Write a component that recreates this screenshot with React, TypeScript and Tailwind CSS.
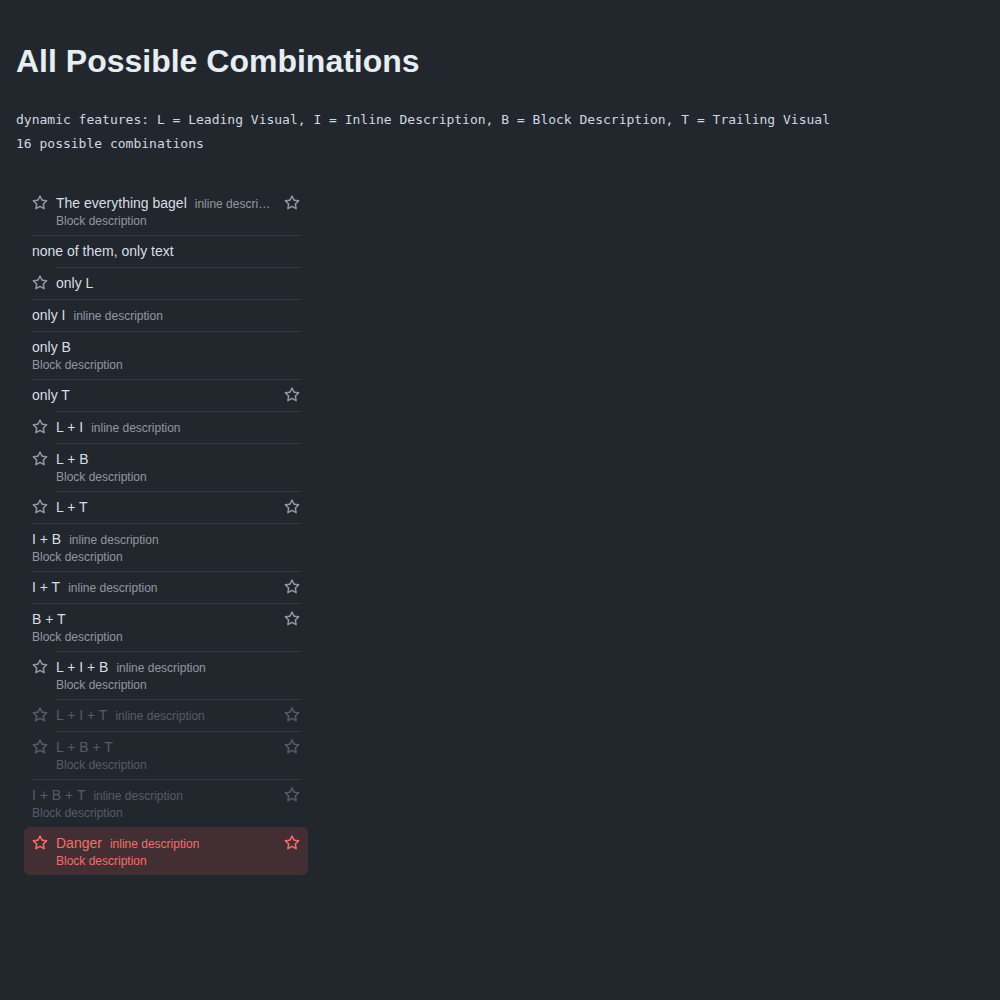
import React from "react";

const Star = ({ className }: { className?: string }) => (
  <svg viewBox="0 0 16 16" width="16" height="16" fill="currentColor" className={className}>
    <path d="M8 .25a.75.75 0 0 1 .673.418l1.882 3.815 4.21.612a.75.75 0 0 1 .416 1.279l-3.046 2.97.719 4.192a.751.751 0 0 1-1.088.791L8 12.347l-3.766 1.98a.75.75 0 0 1-1.088-.79l.72-4.194L.818 6.374a.75.75 0 0 1 .416-1.28l4.21-.611L7.327.668A.75.75 0 0 1 8 .25Zm0 2.445L6.615 5.5a.75.75 0 0 1-.564.41l-3.097.45 2.24 2.184a.75.75 0 0 1 .216.664l-.528 3.084 2.769-1.456a.75.75 0 0 1 .698 0l2.77 1.456-.53-3.084a.75.75 0 0 1 .216-.664l2.24-2.183-3.096-.45a.75.75 0 0 1-.564-.41L8 2.694Z" />
  </svg>
);

type Item = {
  label: string;
  l?: boolean;
  i?: boolean;
  b?: boolean;
  t?: boolean;
  disabled?: boolean;
  danger?: boolean;
};

const items: Item[] = [
  { label: "The everything bagel", l: true, i: true, b: true, t: true },
  { label: "none of them, only text" },
  { label: "only L", l: true },
  { label: "only I", i: true },
  { label: "only B", b: true },
  { label: "only T", t: true },
  { label: "L + I", l: true, i: true },
  { label: "L + B", l: true, b: true },
  { label: "L + T", l: true, t: true },
  { label: "I + B", i: true, b: true },
  { label: "I + T", i: true, t: true },
  { label: "B + T", b: true, t: true },
  { label: "L + I + B", l: true, i: true, b: true },
  { label: "L + I + T", l: true, i: true, t: true, disabled: true },
  { label: "L + B + T", l: true, b: true, t: true, disabled: true },
  { label: "I + B + T", i: true, b: true, t: true, disabled: true },
  { label: "Danger", l: true, i: true, b: true, t: true, danger: true },
];

function Row({ item, first }: { item: Item; first: boolean }) {
  const label = item.danger
    ? "text-[#f47067]"
    : item.disabled
    ? "text-[#545d68]"
    : "text-[#d9dee5]";
  const muted = item.danger
    ? "text-[#f47067]"
    : item.disabled
    ? "text-[#545d68]"
    : "text-[#9198a1]";
  const icon = item.danger
    ? "text-[#f47067]"
    : item.disabled
    ? "text-[#545d68]"
    : "text-[#9198a1]";
  const showDivider = !first && !item.danger;
  return (
    <li
      className={`mx-2 flex px-2 rounded-md ${item.danger ? "bg-[#432e33]" : ""}`}
    >
      {item.l && (
        <div className="pt-[8px] mr-2 w-4 shrink-0">
          <Star className={icon} />
        </div>
      )}
      <div
        className={`flex min-w-0 flex-1 flex-col pb-[6px] ${
          showDivider ? "border-t border-[#363c44] pt-[5px]" : "pt-[6px]"
        }`}
      >
        <div className="flex items-start">
          <div className="flex min-w-0 flex-1 items-baseline">
            <span className={`shrink-0 text-[14px] leading-5 ${label}`}>{item.label}</span>
            {item.i && (
              <span className={`ml-2 min-w-0 truncate text-[12px] leading-4 ${muted}`}>
                inline description
              </span>
            )}
          </div>
          {item.t && (
            <div className="ml-2 w-4 shrink-0 pt-[2px]">
              <Star className={icon} />
            </div>
          )}
        </div>
        {item.b && (
          <div className={`text-[12px] leading-4 ${muted}`}>Block description</div>
        )}
      </div>
    </li>
  );
}

export default function App() {
  return (
    <div
      className="min-h-[1000px] w-full bg-[#22272e] px-4 pt-[41px]"
      style={{ fontFamily: '"Liberation Sans", Arial, sans-serif' }}
    >
      <h1 className="text-[32px] font-bold leading-10 text-[#e6edf3]">All Possible Combinations</h1>
      <div
        className="mt-[27px] text-[13px] leading-6 text-[#d1d7e0]"
        style={{ fontFamily: '"DejaVu Sans Mono", monospace' }}
      >
        <p>dynamic features: L = Leading Visual, I = Inline Description, B = Block Description, T = Trailing Visual</p>
        <p>16 possible combinations</p>
      </div>
      <ul className="mt-[23px] w-[300px] py-2">
        {items.map((it, idx) => (
          <Row key={it.label} item={it} first={idx === 0} />
        ))}
      </ul>
    </div>
  );
}
